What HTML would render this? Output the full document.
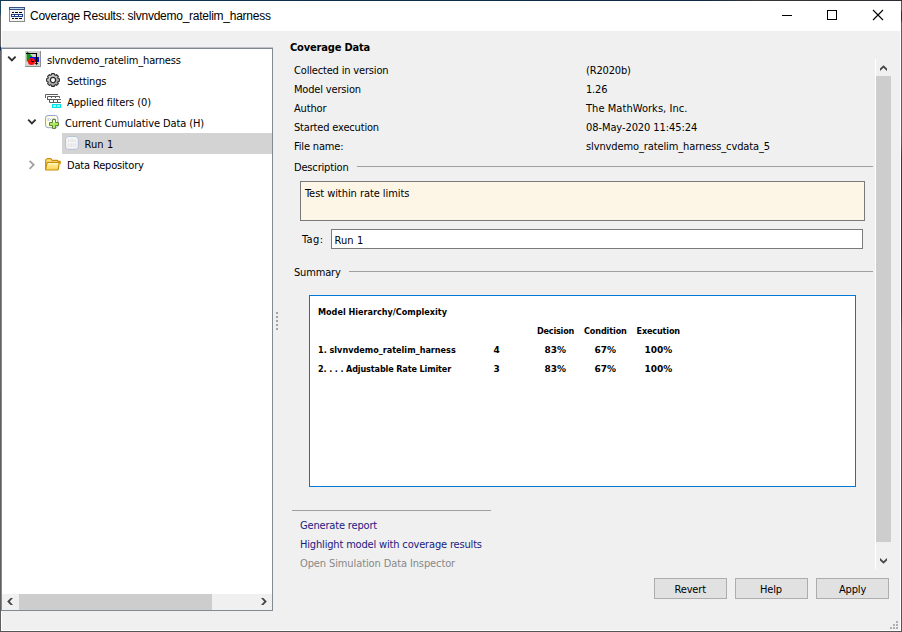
<!DOCTYPE html>
<html>
<head>
<meta charset="utf-8">
<title>Coverage Results: slvnvdemo_ratelim_harness</title>
<style>
html,body{margin:0;padding:0;}
body{width:902px;height:632px;overflow:hidden;background:#f0f0f0;position:relative;
  font-family:"DejaVu Sans Condensed","Liberation Sans",sans-serif;font-size:11px;color:#000;}
.abs{position:absolute;}
.t{position:absolute;margin-top:1px;white-space:pre;line-height:14px;height:14px;font-size:11px;letter-spacing:-0.17px;color:#000;}
.b{font-weight:bold;}
#frame{position:absolute;left:0;top:0;width:902px;height:632px;pointer-events:none;z-index:50;}
#frame i{position:absolute;display:block;}
#bt{left:0;top:0;width:902px;height:1px;background:linear-gradient(90deg,#113a58 0,#0c2c48 40%,#0d2a45 78%,#3a3634 84%,#2a2c33 100%);}
#bl{left:0;top:1px;width:1px;height:631px;background:linear-gradient(180deg,#15405c 0,#1b4560 12px,#626262 16px,#626262 45px,#0f2a55 46px,#0f2a55 49px,#646668 50px,#5e5e5e 100%);}
#br{left:901px;top:1px;width:1px;height:631px;background:linear-gradient(180deg,#555 0,#555 9px,#1a3050 11px,#1a3050 19px,#5c5c5c 22px,#5a5a5a 140px,#363942 155px,#363942 310px,#565656 330px,#555 100%);}
#bb{left:0;top:631px;width:902px;height:1px;background:#555;}
#bw{left:1px;top:630px;width:900px;height:1px;background:#fff;}
#titlebar{position:absolute;left:1px;top:1px;width:900px;height:30px;background:#fff;}
#title{position:absolute;left:30px;top:8px;font-family:"Liberation Sans",sans-serif;font-size:12px;line-height:16px;white-space:pre;color:#000;letter-spacing:-0.25px;}
#leftwhite{position:absolute;left:1px;top:31px;width:1px;height:600px;background:#fff;}
#rightwhite{position:absolute;left:900px;top:31px;width:1px;height:600px;background:#fff;}
/* tree */
#tree{position:absolute;left:1px;top:47px;width:272px;height:564px;background:#fff;
  border-left:1px solid #828a94;border-right:1px solid #828a94;border-bottom:1px solid #828a94;box-sizing:border-box;}
#treetop1{position:absolute;left:1px;top:47px;width:272px;height:1px;background:#bfc2c6;}
#treetop2{position:absolute;left:1px;top:48px;width:272px;height:1px;background:#7f8792;}
#sel{position:absolute;left:62px;top:133px;width:210px;height:21px;background:#d3d3d3;}
#hscroll{position:absolute;left:2px;top:594px;width:270px;height:16px;background:#f0f0f0;}
#hthumb{position:absolute;left:19px;top:594px;width:193px;height:16px;background:#cdcdcd;}
/* right pane */
.hr{position:absolute;height:1px;background:#a0a0a0;}
#desc{position:absolute;left:300px;top:181px;width:565px;height:40px;box-sizing:border-box;border:1px solid #7a7a7a;background:#fdf5e6;}
#tag{position:absolute;left:331px;top:229px;width:532px;height:20px;box-sizing:border-box;border:1px solid #7a7a7a;background:#fff;}
#summary{position:absolute;left:309px;top:295px;width:547px;height:192px;box-sizing:border-box;border:1px solid #0078d7;background:#fff;}
.sm{position:absolute;white-space:pre;font-weight:bold;font-size:9px;line-height:12px;height:12px;letter-spacing:0;color:#000;font-family:"DejaVu Sans Condensed","Liberation Sans",sans-serif;}
.sm.n{font-family:"DejaVu Sans","Liberation Sans",sans-serif;}
.link{color:#1a1a80;}
.dis{color:#888;}
.btn{position:absolute;top:578px;width:73px;height:21px;box-sizing:border-box;border:1px solid #adadad;background:#e1e1e1;}
#vline{position:absolute;left:875px;top:59px;width:1px;height:510px;background:#fff;}
#vtrack{position:absolute;left:876px;top:59px;width:15px;height:510px;background:#f0f0f0;}
#vthumb{position:absolute;left:876px;top:76px;width:15px;height:466px;background:#cdcdcd;}
svg{position:absolute;overflow:visible;}
</style>
</head>
<body>
<div id="titlebar"></div>
<div id="leftwhite"></div>
<div id="rightwhite"></div>
<div id="title">Coverage Results: slvnvdemo_ratelim_harness</div>

<!-- title icon -->
<svg id="ticon" style="left:9px;top:7px" width="16" height="15" viewBox="0 0 16 15">
  <rect x="0.5" y="0.5" width="15" height="14" fill="#f4f4f4" stroke="#8a8a8a"/>
  <rect x="0" y="0" width="16" height="3" fill="#3d4f7d"/>
  <rect x="1" y="1" width="14" height="1" fill="#b8daf2"/>
  <rect x="3" y="5" width="2" height="1" fill="#000"/><rect x="6" y="5" width="3" height="1" fill="#000"/><rect x="10" y="5" width="3" height="1" fill="#000"/>
  <rect x="2" y="7" width="12" height="3" fill="#1b3a8c"/>
  <rect x="3" y="8" width="2" height="1" fill="#fff"/><rect x="6" y="8" width="3" height="1" fill="#fff"/><rect x="10" y="8" width="3" height="1" fill="#fff"/>
  <rect x="3" y="11" width="2" height="1" fill="#000"/><rect x="6" y="11" width="3" height="1" fill="#000"/><rect x="10" y="11" width="3" height="1" fill="#000"/>
</svg>

<!-- window controls -->
<svg style="left:782px;top:10px" width="102" height="11" viewBox="0 0 102 11">
  <rect x="0" y="5" width="10" height="1" fill="#000"/>
  <rect x="45.5" y="0.5" width="9" height="9" fill="none" stroke="#000" stroke-width="1"/>
  <path d="M91 0 L101 10 M101 0 L91 10" stroke="#000" stroke-width="1.1" fill="none"/>
</svg>

<!-- tree -->
<div id="tree"></div>
<div id="treetop1"></div><div id="treetop2"></div>
<div id="sel"></div>
<div id="hscroll"></div><div id="hthumb"></div>
<svg style="left:7px;top:598px" width="6" height="7" viewBox="0 0 6 7"><polygon points="6,0 2.8,3.5 6,7 3.6,7 0.2,3.5 3.6,0" fill="#474747"/></svg>
<svg style="left:261px;top:598px" width="6" height="7" viewBox="0 0 6 7"><polygon points="0,0 3.2,3.5 0,7 2.4,7 5.8,3.5 2.4,0" fill="#474747"/></svg>

<!-- chevrons -->
<svg style="left:6.9px;top:55.2px" width="10" height="8" viewBox="0 0 10 8"><path d="M1.2 1.7 L4.9 5.5 L8.6 1.7" stroke="#303030" stroke-width="1.9" fill="none"/></svg>
<svg style="left:26.6px;top:118.3px" width="10" height="8" viewBox="0 0 10 8"><path d="M1.2 1.7 L4.9 5.5 L8.6 1.7" stroke="#303030" stroke-width="1.9" fill="none"/></svg>
<svg style="left:28px;top:160px" width="8" height="10" viewBox="0 0 8 10"><path d="M1.6 0.8 L5.6 4.8 L1.6 8.8" stroke="#a3a3a3" stroke-width="1.9" fill="none"/></svg>

<!-- model icon -->
<svg style="left:25px;top:51px" width="16" height="16" viewBox="0 0 16 16">
  <rect x="0" y="0" width="16" height="16" fill="#d2d2d2"/>
  <rect x="15" y="0" width="1" height="16" fill="#8e8e8e"/>
  <rect x="0" y="15" width="16" height="1" fill="#8e8e8e"/>
  <path d="M1.7 0.8 L2.7 0.8 L7.4 5.6 L7.4 6.2 L3 10.4 L1.7 10.4 Z" fill="#0a9612"/>
  <rect x="5" y="6" width="9" height="5" fill="#0a0af0"/>
  <circle cx="6.5" cy="10.6" r="3.5" fill="#ff0a0a"/>
  <path d="M6.5 8 L6.5 10.5 L8.8 10.5" stroke="#000" stroke-width="1" fill="none"/>
  <path d="M1 2.5 L11.5 2.5 L11.5 13" stroke="#000" stroke-width="1.1" fill="none"/>
  <path d="M9.8 12 L13.2 12 L11.5 14 Z" fill="#000"/>
</svg>

<!-- gear -->
<svg style="left:46px;top:73px" width="14" height="14" viewBox="-7 -7 14 14">
  <defs><linearGradient id="gg" x1="0" y1="0" x2="0.6" y2="1"><stop offset="0" stop-color="#e2e2e2"/><stop offset="1" stop-color="#9c9c9c"/></linearGradient></defs>
  <path d="M-1.55 -5.17 L-1.27 -6.38 L1.27 -6.38 L1.55 -5.17 L2.56 -4.75 L3.61 -5.40 L5.40 -3.61 L4.75 -2.56 L5.17 -1.55 L6.38 -1.27 L6.38 1.27 L5.17 1.55 L4.75 2.56 L5.40 3.61 L3.61 5.40 L2.56 4.75 L1.55 5.17 L1.27 6.38 L-1.27 6.38 L-1.55 5.17 L-2.56 4.75 L-3.61 5.40 L-5.40 3.61 L-4.75 2.56 L-5.17 1.55 L-6.38 1.27 L-6.38 -1.27 L-5.17 -1.55 L-4.75 -2.56 L-5.40 -3.61 L-3.61 -5.40 L-2.56 -4.75 Z" fill="url(#gg)" stroke="#2c2c2c" stroke-width="1.1" stroke-linejoin="round"/>
  <circle cx="0" cy="0" r="2.6" fill="#fff" stroke="#262626" stroke-width="1.3"/>
</svg>

<!-- filter icon -->
<svg style="left:45px;top:94px" width="17" height="15" viewBox="0 0 17 15">
  <g stroke="#5c5c5c" stroke-width="1" fill="none">
    <path d="M13 0.5 L0.5 0.5 L0.5 4"/>
    <path d="M2.5 6 L2.5 2.5 L14.5 2.5 L14.5 4 M6.5 2.5 L6.5 4 M10.5 2.5 L10.5 4"/>
    <path d="M2.5 5.5 L16 5.5 M4.5 8.5 L16 8.5 M4.5 5.5 L4.5 8.5 M8.5 5.5 L8.5 8.5 M12.5 5.5 L12.5 8.5"/>
  </g>
  <rect x="7" y="10" width="9" height="4" fill="#00e6e6"/>
  <rect x="8" y="11" width="3" height="2" fill="#9ff3f3"/>
  <rect x="12" y="11" width="3" height="2" fill="#9ff3f3"/>
</svg>

<!-- cumulative data icon -->
<svg style="left:45px;top:115px" width="15" height="15" viewBox="0 0 15 15">
  <rect x="0.5" y="0.5" width="12.4" height="12.2" rx="2.6" fill="#fffcd6" stroke="#8fa6cf" stroke-width="1"/>
  <rect x="3" y="1.6" width="8.5" height="8" fill="#ffffff" opacity="0.8"/>
  <path d="M3.2 3 L3.2 6 M4.5 3.5 L6.5 5.5 M6.5 3.5 L4.5 5.5 M8 3 L8.6 4 M9.6 3 L9.6 4" stroke="#a9bcdc" stroke-width="0.9" fill="none"/>
  <path d="M7.5 4.5 L10.5 4.5 L10.5 7.5 L13.5 7.5 L13.5 10.5 L10.5 10.5 L10.5 13.5 L7.5 13.5 L7.5 10.5 L4.5 10.5 L4.5 7.5 L7.5 7.5 Z" fill="#a9ea5e" stroke="#55782a" stroke-width="0.9"/>
  <rect x="8.1" y="5.1" width="1.8" height="2.6" fill="#f4fce6"/>
</svg>

<!-- run icon -->
<svg style="left:65px;top:136px" width="14" height="14" viewBox="0 0 14 14">
  <rect x="0.6" y="0.6" width="12.8" height="12.8" rx="3" fill="#d9dbe0" stroke="#b4bfd8" stroke-width="0.9"/>
  <rect x="1.2" y="1" width="11.4" height="11.6" rx="2.6" fill="#f5f5f5"/>
  <path d="M3.5 3.5 L3.5 6 M10 3.5 L10 6 M6.8 7.5 L6.8 11" stroke="#dedede" stroke-width="1" fill="none"/>
  <path d="M6.8 3 L8.2 4.6 L6.8 6.2 L5.4 4.6 Z M4 7.6 L5.4 9.2 L4 10.8 L2.6 9.2 Z M9.8 7.6 L11.2 9.2 L9.8 10.8 L8.4 9.2 Z" stroke="#dcdcdc" stroke-width="0.8" fill="none"/>
</svg>

<!-- folder -->
<svg style="left:45px;top:158px" width="16" height="13" viewBox="0 0 16 13">
  <defs><linearGradient id="fg" x1="0" y1="0" x2="0" y2="1"><stop offset="0" stop-color="#fff3ad"/><stop offset="1" stop-color="#ffd24f"/></linearGradient></defs>
  <path d="M0.7 11.4 L0.7 2.6 Q0.7 1.4 1.7 1 L2.6 0.6 L5.8 0.6 L7.2 2.3 L12.2 2.3 Q13.3 2.3 13.3 3.4 L13.3 4 L14.6 3.4 Q15.4 3.2 15.3 4 L15 6.2" fill="#ffe27a" stroke="#c88f0e" stroke-width="1.2" stroke-linejoin="round"/>
  <path d="M1 12 Q0.5 12 0.7 11.2 L1.9 5.2 Q2.1 4.4 2.9 4.4 L13.4 4.4 Q14.2 4.4 14.1 5.2 L13.3 11.2 Q13.2 12 12.4 12 Z" fill="url(#fg)" stroke="#c88f0e" stroke-width="1.2" stroke-linejoin="round"/>
  <path d="M3 5.7 L13 5.7" stroke="#fff7c8" stroke-width="0.9"/>
</svg>

<div class="t" style="left:47px;top:53px">slvnvdemo_ratelim_harness</div>
<div class="t" style="left:67px;top:74px">Settings</div>
<div class="t" style="left:67px;top:95px;letter-spacing:-0.09px">Applied filters (0)</div>
<div class="t" style="left:65px;top:116px;letter-spacing:-0.1px">Current Cumulative Data (H)</div>
<div class="t" style="left:84.5px;top:137px;letter-spacing:0.1px">Run 1</div>
<div class="t" style="left:67px;top:158px">Data Repository</div>

<svg style="left:276px;top:312px" width="2" height="18" viewBox="0 0 2 18" shape-rendering="crispEdges"><g fill="#a3a3a3"><rect x="0" y="0" width="2" height="2"/><rect x="0" y="4" width="2" height="2"/><rect x="0" y="8" width="2" height="2"/><rect x="0" y="12" width="2" height="2"/><rect x="0" y="16" width="2" height="2"/></g></svg>
<!-- right pane -->
<div class="t b" style="left:290px;top:40px">Coverage Data</div>
<div class="t" style="left:294px;top:63px">Collected in version</div>
<div class="t" style="left:294px;top:82px">Model version</div>
<div class="t" style="left:294px;top:101px">Author</div>
<div class="t" style="left:294px;top:120px">Started execution</div>
<div class="t" style="left:294px;top:139px">File name:</div>
<div class="t" style="left:586px;top:63px">(R2020b)</div>
<div class="t" style="left:586px;top:82px">1.26</div>
<div class="t" style="left:586px;top:101px;letter-spacing:0.05px">The MathWorks, Inc.</div>
<div class="t" style="left:586px;top:120px;letter-spacing:-0.08px">08-May-2020 11:45:24</div>
<div class="t" style="left:586px;top:139px;letter-spacing:-0.11px">slvnvdemo_ratelim_harness_cvdata_5</div>

<div class="t" style="left:294px;top:160px">Description</div>
<div class="hr" style="left:357px;top:166px;width:516px"></div>
<div id="desc"></div>
<div class="t" style="left:305px;top:186px;letter-spacing:-0.06px">Test within rate limits</div>
<div class="t" style="left:302px;top:232px;letter-spacing:0.4px">Tag:</div>
<div id="tag"></div>
<div class="t" style="left:334.5px;top:233px;letter-spacing:0.1px">Run 1</div>
<div class="t" style="left:294px;top:265px">Summary</div>
<div class="hr" style="left:349px;top:271px;width:524px"></div>
<div id="summary"></div>

<div class="sm" style="left:318px;top:306px">Model Hierarchy/Complexity</div>
<div class="sm" style="left:537px;top:325px;letter-spacing:-0.2px">Decision</div>
<div class="sm" style="left:584px;top:325px;letter-spacing:-0.12px">Condition</div>
<div class="sm" style="left:636.5px;top:325px;letter-spacing:-0.15px">Execution</div>
<div class="sm" style="left:318px;top:344px">1. slvnvdemo_ratelim_harness</div>
<div class="sm n" style="left:493.5px;top:344px">4</div>
<div class="sm n" style="left:544.5px;top:344px">83%</div>
<div class="sm n" style="left:594.5px;top:344px">67%</div>
<div class="sm n" style="left:644.5px;top:344px">100%</div>
<div class="sm" style="left:318px;top:363px;letter-spacing:-0.13px">2. . . . Adjustable Rate Limiter</div>
<div class="sm n" style="left:493.5px;top:363px">3</div>
<div class="sm n" style="left:544.5px;top:363px">83%</div>
<div class="sm n" style="left:594.5px;top:363px">67%</div>
<div class="sm n" style="left:644.5px;top:363px">100%</div>

<div class="hr" style="left:292px;top:510px;width:199px"></div>
<div class="t link" style="left:300px;top:518px">Generate report</div>
<div class="t link" style="left:300px;top:537px">Highlight model with coverage results</div>
<div class="t dis" style="left:300px;top:556px;letter-spacing:-0.11px">Open Simulation Data Inspector</div>

<div id="vline"></div><div id="vtrack"></div><div id="vthumb"></div>
<svg style="left:880px;top:65px" width="7" height="6" viewBox="0 0 7 6"><polygon points="0,6 3.5,2.8 7,6 7,3.6 3.5,0.2 0,3.6" fill="#474747"/></svg>
<svg style="left:880px;top:558px" width="7" height="6" viewBox="0 0 7 6"><polygon points="0,0 3.5,3.2 7,0 7,2.4 3.5,5.8 0,2.4" fill="#474747"/></svg>

<div class="btn" style="left:654px"></div>
<div class="btn" style="left:735px"></div>
<div class="btn" style="left:816px"></div>
<div class="t" style="left:674.5px;top:582px">Revert</div>
<div class="t" style="left:760px;top:582px">Help</div>
<div class="t" style="left:839px;top:582px">Apply</div>

<svg style="left:890px;top:621px" width="8" height="8" viewBox="0 0 8 8" shape-rendering="crispEdges"><g fill="#b0b0b0"><rect x="6" y="0" width="2" height="2"/><rect x="3" y="3" width="2" height="2"/><rect x="6" y="3" width="2" height="2"/><rect x="0" y="6" width="2" height="2"/><rect x="3" y="6" width="2" height="2"/><rect x="6" y="6" width="2" height="2"/></g></svg>
<div id="frame"><i id="bw"></i><i id="bt"></i><i id="bl"></i><i id="br"></i><i id="bb"></i></div>
</body>
</html>
